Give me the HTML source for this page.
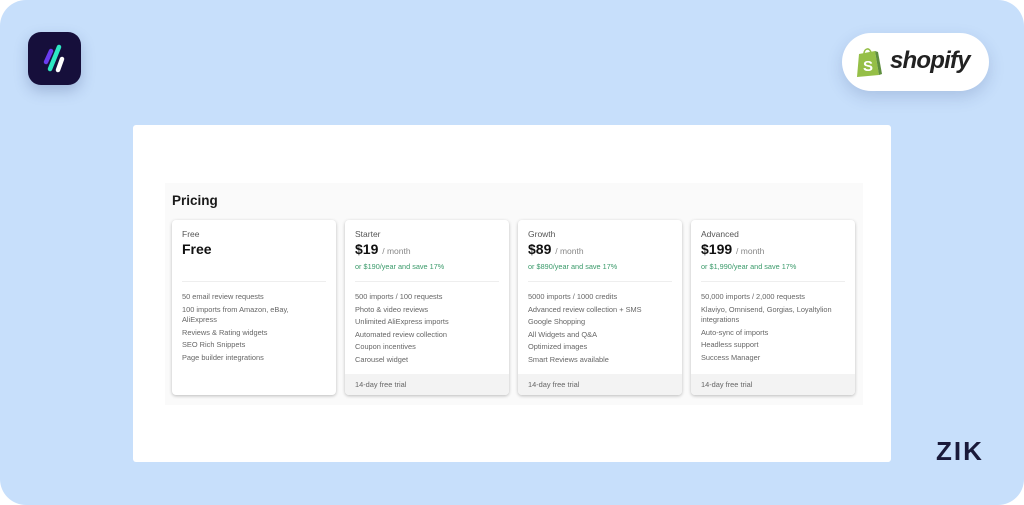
<!DOCTYPE html><html><head><style>
*{margin:0;padding:0;box-sizing:border-box}
body{width:1024px;height:505px;background:#fff;font-family:"Liberation Sans",sans-serif;position:relative;overflow:hidden}
.bg{position:absolute;left:0;top:0;width:1024px;height:505px;background:#c7dffb;border-radius:26px}
.logo{position:absolute;left:28px;top:32px;width:53px;height:53px;background:#160f3b;border-radius:13px;box-shadow:0 6px 14px rgba(40,60,120,.25)}
.shop{position:absolute;left:842px;top:33px;width:147px;height:58px;background:#fff;border-radius:29px;box-shadow:0 6px 16px rgba(40,60,120,.18)}
.shop span{position:absolute;left:48px;top:14px;font-size:24px;font-weight:bold;font-style:italic;color:#222;letter-spacing:-0.8px}
.panel{position:absolute;left:133px;top:125px;width:758px;height:337px;background:#fff;border-radius:3px}
.sec{position:absolute;left:165px;top:183px;width:698px;height:222px;background:#fafafa}
h1{position:absolute;left:172px;top:193px;font-size:13.5px;font-weight:bold;color:#1a1a1a}
.card{position:absolute;top:220px;width:164px;height:175px;background:#fff;border-radius:4px;box-shadow:0 1px 3px rgba(0,0,0,.25);overflow:hidden}
.card .n{position:absolute;left:10px;top:9px;font-size:8.5px;color:#555}
.card .p{position:absolute;left:10px;top:21px;font-size:14px;font-weight:bold;color:#111}
.card .p small{font-size:8.5px;font-weight:normal;color:#888}
.card .y{position:absolute;left:10px;top:42px;font-size:7.3px;color:#3a9a6a}
.card hr{position:absolute;left:10px;top:61px;width:144px;border:0;border-top:1px solid #eee}
.card ul{position:absolute;left:10px;top:71px;list-style:none;font-size:7.4px;color:#666;line-height:12.6px;width:150px}
.card .f{position:absolute;left:0;bottom:0;width:100%;height:21px;background:#f3f3f3;font-size:7.4px;color:#666;padding:6px 10px}
.zik{position:absolute;left:936px;top:436px;font-size:26px;font-weight:bold;color:#1a1a3a;letter-spacing:2px}
</style></head><body>
<div class="bg"></div>
<div class="logo"><svg width="53" height="53"><line x1="23" y1="19" x2="18" y2="30" stroke="#6a3cf0" stroke-width="4.5" stroke-linecap="round"/><line x1="31" y1="15" x2="22" y2="37" stroke="#2ee8c4" stroke-width="4.5" stroke-linecap="round"/><line x1="34" y1="27" x2="30" y2="38" stroke="#fff" stroke-width="4.5" stroke-linecap="round"/></svg></div>
<div class="shop"><svg style="position:absolute;left:13px;top:13px" width="30" height="32"><path d="M4 8 L20 5 L24 29 L2 31 Z" fill="#95bf47"/><path d="M20 5 L24 29 L27 28 L23 6Z" fill="#5e8e3e"/><path d="M9 8 C9 2 15 1 16 7" stroke="#95bf47" stroke-width="1.6" fill="none"/><text x="8" y="25" font-size="15" font-weight="bold" fill="#fff" font-family="Liberation Sans">S</text></svg><span>shopify</span></div>
<div class="panel"></div>
<div class="sec"></div>
<h1>Pricing</h1>
<div class="card" style="left:172px"><div class="n">Free</div><div class="p">Free</div><hr><ul><li>50 email review requests</li><li style="line-height:10px;margin:1px 0 2px">100 imports from Amazon, eBay,<br>AliExpress</li><li>Reviews &amp; Rating widgets</li><li>SEO Rich Snippets</li><li>Page builder integrations</li></ul></div>
<div class="card" style="left:345px"><div class="n">Starter</div><div class="p">$19 <small>/ month</small></div><div class="y">or $190/year and save 17%</div><hr><ul><li>500 imports / 100 requests</li><li>Photo &amp; video reviews</li><li>Unlimited AliExpress imports</li><li>Automated review collection</li><li>Coupon incentives</li><li>Carousel widget</li></ul><div class="f">14-day free trial</div></div>
<div class="card" style="left:518px"><div class="n">Growth</div><div class="p">$89 <small>/ month</small></div><div class="y">or $890/year and save 17%</div><hr><ul><li>5000 imports / 1000 credits</li><li>Advanced review collection + SMS</li><li>Google Shopping</li><li>All Widgets and Q&amp;A</li><li>Optimized images</li><li>Smart Reviews available</li></ul><div class="f">14-day free trial</div></div>
<div class="card" style="left:691px"><div class="n">Advanced</div><div class="p">$199 <small>/ month</small></div><div class="y">or $1,990/year and save 17%</div><hr><ul><li>50,000 imports / 2,000 requests</li><li style="line-height:10px;margin:1px 0 2px">Klaviyo, Omnisend, Gorgias, Loyaltylion<br>integrations</li><li>Auto-sync of imports</li><li>Headless support</li><li>Success Manager</li></ul><div class="f">14-day free trial</div></div>
<div class="zik">ZIK</div>
</body></html>
